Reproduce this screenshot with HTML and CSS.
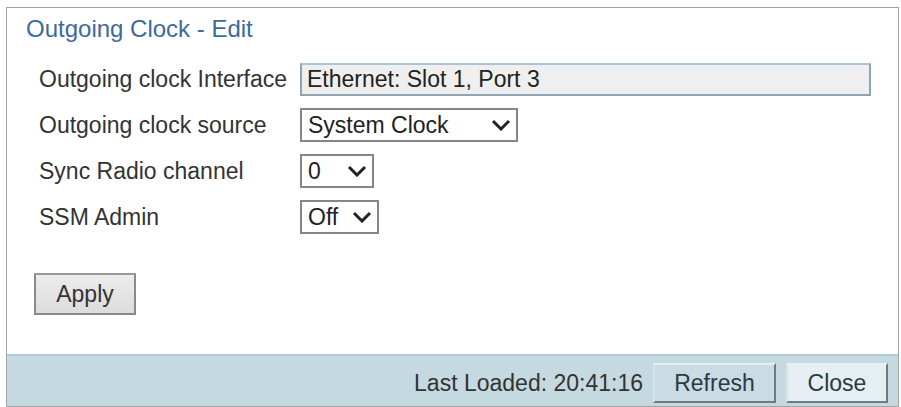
FILE: index.html
```html
<!DOCTYPE html>
<html lang="en">
<head>
<meta charset="utf-8">
<title>Outgoing Clock - Edit</title>
<link rel="stylesheet" href="styles.css">
</head>
<body>
<div class="panel">
  <div class="title">Outgoing Clock - Edit</div>
  <div class="form">
    <div class="label">Outgoing clock Interface</div>
    <div class="field"><div class="readonly">Ethernet: Slot 1, Port 3</div></div>

    <div class="label">Outgoing clock source</div>
    <div class="field">
      <div class="select w-source"><span>System Clock</span>
        <svg class="chev" width="20" height="12" viewBox="0 0 20 12"><path d="M2 2 L10 10 L18 2" fill="none" stroke="#222" stroke-width="3"/></svg>
      </div>
    </div>

    <div class="label">Sync Radio channel</div>
    <div class="field">
      <div class="select w-sync"><span>0</span>
        <svg class="chev" width="20" height="12" viewBox="0 0 20 12"><path d="M2 2 L10 10 L18 2" fill="none" stroke="#222" stroke-width="3"/></svg>
      </div>
    </div>

    <div class="label">SSM Admin</div>
    <div class="field">
      <div class="select w-ssm"><span>Off</span>
        <svg class="chev" width="20" height="12" viewBox="0 0 20 12"><path d="M2 2 L10 10 L18 2" fill="none" stroke="#222" stroke-width="3"/></svg>
      </div>
    </div>
  </div>
  <div class="actions">
    <button class="btn-apply" type="button">Apply</button>
  </div>
  <div class="footer">
    <span class="loaded">Last Loaded: 20:41:16</span>
    <button class="fbtn refresh" type="button">Refresh</button>
    <button class="fbtn close" type="button">Close</button>
  </div>
</div>
</body>
</html>
```
FILE: styles.css
```css
html, body {
  margin: 0;
  padding: 0;
  background: #ffffff;
}

body {
  font-family: "Liberation Sans", Arial, sans-serif;
  font-size: 23px;
  color: #333333;
}

.panel {
  box-sizing: border-box;
  margin: 7px 0 0 6px;
  width: 893px;
  height: 400px;
  border: 1px solid #a4a4a4;
  display: flex;
  flex-direction: column;
}

.title {
  font-size: 24px;
  line-height: 28px;
  color: #3b6a9d;
  padding: 7px 0 0 19px;
}

.form {
  margin-top: 19px;
  padding-left: 32px;
  display: grid;
  grid-template-columns: 261px 1fr;
  grid-auto-rows: 34px;
  row-gap: 12px;
  align-items: center;
}

.label {
  line-height: 26px;
  color: #333333;
  white-space: nowrap;
}

.field {
  display: flex;
  align-items: center;
  height: 34px;
}

.readonly {
  box-sizing: border-box;
  width: 571px;
  height: 33px;
  line-height: 28px;
  padding-left: 5px;
  background: #efefef;
  border: 2px solid #8ea3b4;
  border-top-color: #aac3d7;
  color: #222222;
  white-space: nowrap;
}

.select {
  box-sizing: border-box;
  height: 34px;
  display: flex;
  align-items: center;
  justify-content: space-between;
  padding: 0 5px 0 6px;
  border: 2px solid #868686;
  background: #ffffff;
  color: #222222;
}

.chev {
  display: block;
  flex: none;
}

.w-source { width: 218px; }
.w-sync { width: 74px; }
.w-ssm { width: 79px; }

.actions {
  margin-top: 39px;
  padding-left: 27px;
  display: flex;
}

.btn-apply {
  box-sizing: border-box;
  width: 102px;
  height: 42px;
  font-family: inherit;
  font-size: 23px;
  color: #333333;
  background: linear-gradient(#ececec, #dcdcdc);
  border: 2px solid #8a8a8a;
  border-top-color: #9a9a9a;
  padding: 0;
}

.footer {
  margin-top: auto;
  box-sizing: border-box;
  height: 52px;
  border-top: 2px solid #b3cadb;
  background: #c5d9e1;
  display: flex;
  align-items: flex-start;
  justify-content: flex-end;
  padding: 7px 10px 0 0;
  gap: 10px;
}

.loaded {
  line-height: 40px;
  color: #333333;
  white-space: nowrap;
}

.fbtn {
  box-sizing: border-box;
  height: 40px;
  padding: 0;
  font-family: inherit;
  font-size: 23px;
  color: #2c3944;
  border: 2px solid #6f7b80;
  border-top-color: #e6eff3;
  border-left-color: #d7e3e8;
}

.refresh {
  width: 123px;
  background: #c9dce4;
}

.close {
  width: 102px;
  background: #e4eef3;
}
```
